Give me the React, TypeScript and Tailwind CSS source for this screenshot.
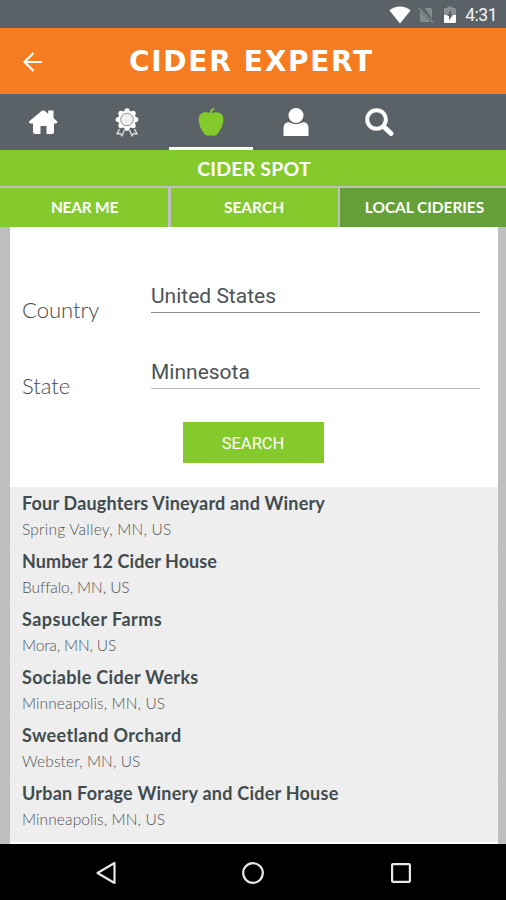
import React from 'react';

interface Cidery {
    name: string;
    place: string;
    nameClass: string;
    placeClass: string;
}

const cideries: Cidery[] = [
    { name: 'Four Daughters Vineyard and Winery', place: 'Spring Valley, MN, US', nameClass: 'tracking-[0.19px]', placeClass: 'tracking-[0.23px]' },
    { name: 'Number 12 Cider House', place: 'Buffalo, MN, US', nameClass: 'tracking-[0.08px]', placeClass: 'tracking-[-0.08px]' },
    { name: 'Sapsucker Farms', place: 'Mora, MN, US', nameClass: 'tracking-[0.47px]', placeClass: 'tracking-[-0.15px]' },
    { name: 'Sociable Cider Werks', place: 'Minneapolis, MN, US', nameClass: 'tracking-[0.34px]', placeClass: 'tracking-[0.1px]' },
    { name: 'Sweetland Orchard', place: 'Webster, MN, US', nameClass: 'tracking-[0.35px]', placeClass: 'tracking-[0.1px]' },
    { name: 'Urban Forage Winery and Cider House', place: 'Minneapolis, MN, US', nameClass: 'tracking-[0.24px]', placeClass: 'tracking-[0.1px]' },
];

const tabs = [
    { label: 'Home', icon: HomeIcon },
    { label: 'Awards', icon: MedalIcon },
    { label: 'Cider spot', icon: AppleIcon, active: true },
    { label: 'Profile', icon: PersonIcon },
    { label: 'Search', icon: SearchIcon },
];

export default function App() {
    return (
        <div className="flex h-[900px] w-[506px] flex-col overflow-hidden bg-[#bfbfbf] font-['Lato',sans-serif]">
            <StatusBar />

            <header className="flex h-[66px] shrink-0 items-center bg-[#f57c20] pt-px pl-[23px]">
                <button aria-label="Back" className="w-[106px] shrink-0">
                    <svg width="20" height="20" viewBox="0 0 20 20" fill="none" stroke="#fff" strokeWidth="2.200">
                        <path d="M19 10H2M10.500 1 1.500 10l9 9" />
                    </svg>
                </button>
                <h1 className="whitespace-nowrap font-['DejaVu_Sans',sans-serif] text-[28px] leading-none font-bold tracking-[1.7px] text-white">
                    CIDER EXPERT
                </h1>
            </header>

            <nav className="grid h-14 shrink-0 grid-cols-6 bg-[#5b6267]" aria-label="Main">
                {tabs.map(({ label, icon: Icon, active }) => (
                    <button
                        key={label}
                        aria-label={label}
                        className={`flex items-center justify-center border-b-[3px] pt-[3px] pl-px ${active ? 'border-white' : 'border-transparent'}`}
                    >
                        <Icon />
                    </button>
                ))}
            </nav>

            <h2 className="flex h-9 shrink-0 items-center justify-center bg-[#85ca2c] pl-0.5 pt-px text-[19.5px] font-bold tracking-[0.2px] text-white">
                CIDER SPOT
            </h2>

            <div className="mt-0.5 grid h-[39px] shrink-0 grid-cols-[168px_167px_166px] gap-x-[2.5px] text-[15.5px] font-bold text-white">
                <button className="bg-[#85ca2c] pt-px pl-px tracking-[-0.25px]">NEAR ME</button>
                <button className="bg-[#85ca2c] pt-px">SEARCH</button>
                <button className="bg-[#659f37] pt-px pl-[3px] tracking-[-0.05px]">LOCAL CIDERIES</button>
            </div>

            <main className="mr-2 ml-2.5 flex min-h-0 flex-1 flex-col bg-white">
                <form className="flex h-[260px] shrink-0 flex-col px-3 pt-[51px]">
                    <Field label="Country" value="United States" line="border-[#8d8b90]" />
                    <Field label="State" value="Minnesota" line="border-[#bcbcbc]" />
                    <button
                        type="button"
                        className="mt-[-8px] ml-[160.500px] h-[41px] w-[141px] bg-[#85ca2c] pt-[3px] font-['Roboto',sans-serif] text-[16.5px] text-white"
                    >
                        SEARCH
                    </button>
                </form>

                <ul className="h-[355px] overflow-hidden bg-[#eeeeee]">
                    {cideries.map(item => (
                        <li key={item.name} className="h-[58.1px] border-b border-[#e9e9e9] px-3 pt-1 whitespace-nowrap">
                            <p className={`text-[18px] leading-[24px] font-bold text-[#414c4f] ${item.nameClass}`}>{item.name}</p>
                            <p className={`pt-0.5 text-[15.5px] leading-[24px] font-light text-[#515456] ${item.placeClass}`}>{item.place}</p>
                        </li>
                    ))}
                </ul>
            </main>

            <SystemNav />
        </div>
    );
}

function Field({ label, value, line }: { label: string; value: string; line: string }) {
    return (
        <div className="flex h-[76px]">
            <label className="w-[129px] pt-[18px] text-[22px] leading-[28px] font-light text-[#46494b]">{label}</label>
            <div className={`h-[35px] w-[329px] border-b-[1.5px] pt-1 font-['Roboto',sans-serif] text-[21px] leading-[28px] text-[#4b5357] ${line}`}>
                {value}
            </div>
        </div>
    );
}

function StatusBar() {
    return (
        <div className="flex h-7 shrink-0 items-center justify-end bg-[#5b6267] pt-px pr-[9px] font-['Roboto',sans-serif] text-[17.5px] text-[#f4f4f4]">
            <svg width="22" height="18" viewBox="0 0 22 18" fill="#fff">
                <path d="M11 17.500.300 4.200C6.500-.9 15.500-.9 21.700 4.200z" />
            </svg>
            <svg className="ml-[7px]" width="16" height="18" viewBox="0 0 16 18">
                <path d="M7 2h5.500q1.500 0 1.500 1.500V13zM2 5.500 12.500 16H3.500Q2 16 2 14.500z" fill="#858b8e" />
                <path d="m.7 2.300 14.200 14.200" stroke="#858b8e" strokeWidth="1.500" />
            </svg>
            <svg className="ml-2.5" width="12" height="18" viewBox="0 0 12 18">
                <path d="M3.500 2V.5h5V2H11q1 0 1 1v7H0V3q0-1 1-1z" fill="#8b9093" />
                <path d="M0 9h12v7q0 1-1 1H1q-1 0-1-1z" fill="#fff" />
                <path d="M7 4v4.500h2L5 14.500V10H3z" fill="#5b6267" />
            </svg>
            <span className="ml-[9px] pt-0.5 tracking-[-0.5px]">4:31</span>
        </div>
    );
}

function SystemNav() {
    return (
        <div className="grid h-14 shrink-0 grid-cols-[147px_147px_147px] justify-center bg-black pt-px pr-px" aria-label="System navigation">
            <div className="flex items-center justify-center">
                <svg width="24" height="24" viewBox="0 0 24 24" fill="none" stroke="#e8e8e8" strokeWidth="2.200">
                    <path d="M20.500 2v20L3.500 12z" strokeLinejoin="round" />
                </svg>
            </div>
            <div className="flex items-center justify-center pl-px">
                <svg width="24" height="24" viewBox="0 0 24 24" fill="none" stroke="#e8e8e8" strokeWidth="2.200">
                    <circle cx="12" cy="12" r="9.800" />
                </svg>
            </div>
            <div className="flex items-center justify-center pl-0.5">
                <svg width="22" height="22" viewBox="0 0 22 22" fill="none" stroke="#e8e8e8" strokeWidth="2.200">
                    <rect x="2.100" y="2.100" width="17.800" height="17.800" rx="1" />
                </svg>
            </div>
        </div>
    );
}

function HomeIcon() {
    return (
        <svg width="30" height="30" viewBox="0 0 30 30" fill="#fff">
            <path d="M15 3.500Q16 3.300 17 4.100L20.200 6.900V3.500H25.500V11L28.800 14Q30.200 16 28 16.500H26V25Q26 27 24 27H18.500V19H12.500V27H7Q5 27 5 25V16.500H2.500Q0 16 1.500 14L13 4.500Q14 3.500 15 3.500z" />
        </svg>
    );
}

function MedalIcon() {
    return (
        <svg width="26" height="30" viewBox="0 0 26 30">
            <g fill="#fff">
                <circle cx="13" cy="12.500" r="9" />
                <circle cx="13" cy="3.800" r="2.600" />
                <circle cx="19.100" cy="6.400" r="2.600" />
                <circle cx="21.700" cy="12.500" r="2.600" />
                <circle cx="19.100" cy="18.600" r="2.600" />
                <circle cx="13" cy="21.200" r="2.600" />
                <circle cx="6.900" cy="18.600" r="2.600" />
                <circle cx="4.300" cy="12.500" r="2.600" />
                <circle cx="6.900" cy="6.400" r="2.600" />
            </g>
            <circle cx="13" cy="12.500" r="6.300" fill="#f0f1f1" stroke="#8b9092" strokeWidth="1" />
            <path d="M5.500 22 3 26.800l3.200-.3 1.800 2.200L10.500 23M20.500 22l2.500 4.800-3.200-.3-1.800 2.200L15.500 23" fill="none" stroke="#d7dada" strokeWidth="1.400" />
        </svg>
    );
}

function AppleIcon() {
    return (
        <svg width="26" height="30" viewBox="0 0 26 30" fill="#85ca2c">
            <path d="M11.800 6Q11.800 2.500 15.500.8L16.800 2.200Q14.200 3.500 13.800 6Q16.500 4.900 19.500 5.200C24 6 25.800 9.500 25.300 14C24.800 18.500 23 22.500 20 26.200C18 29 16 29 13 28.300C10 29 8 29 6 26.200C3 22.500 1.200 18.500.7 14C.2 9.500 2 6 6.500 5.200Q9.500 4.900 11.800 6z" />
        </svg>
    );
}

function PersonIcon() {
    return (
        <svg width="26" height="30" viewBox="0 0 26 30" fill="#fff">
            <circle cx="13" cy="8.500" r="7.500" />
            <path d="M.5 29V21Q.5 15.200 6.300 15.200Q13 19.500 19.700 15.200Q25.500 15.200 25.500 21v8z" />
        </svg>
    );
}

function SearchIcon() {
    return (
        <svg width="30" height="30" viewBox="0 0 30 30" fill="none" stroke="#fff">
            <circle cx="11.500" cy="12.500" r="9.300" strokeWidth="4" />
            <path d="m18.500 19.500 7.500 7" strokeWidth="5" strokeLinecap="round" />
        </svg>
    );
}
